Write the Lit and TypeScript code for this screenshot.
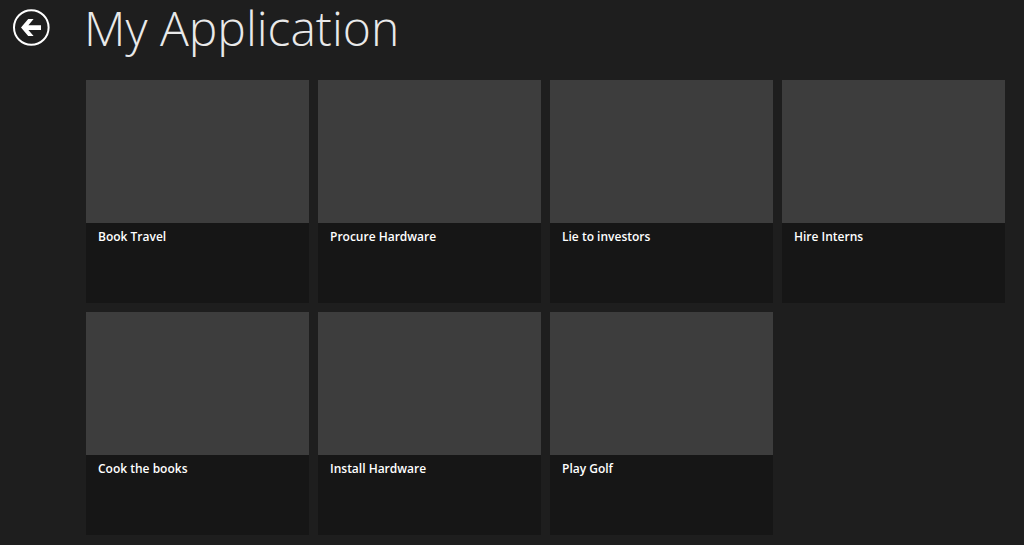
import { LitElement, html, css } from "lit";
import { customElement, property } from "lit/decorators.js";

@customElement("task-tile")
export class TaskTile extends LitElement {
  @property() label = "";

  static styles = css`
    :host {
      display: block;
    }
    .tile {
      display: grid;
      grid-template-rows: 143fr 80fr;
      aspect-ratio: 1;
      background: #161616;
      color: #fff;
      text-decoration: none;
    }
    .picture {
      background: #3d3d3d;
    }
    .label {
      padding: 4px 12px;
      font-size: 12px;
      line-height: 20px;
      font-weight: 600;
    }
  `;

  render() {
    return html`
      <a class="tile" href="#">
        <span class="picture"></span>
        <span class="label">${this.label}</span>
      </a>
    `;
  }
}

@customElement("app-root")
export class AppRoot extends LitElement {
  private tasks = [
    "Book Travel",
    "Procure Hardware",
    "Lie to investors",
    "Hire Interns",
    "Cook the books",
    "Install Hardware",
    "Play Golf",
  ];

  static styles = css`
    :host {
      display: block;
      box-sizing: border-box;
      min-height: 100vh;
      background: #1e1e1e;
      color: #fff;
      font-family: "Open Sans", "Noto Sans", sans-serif;
    }
    .header {
      display: grid;
      grid-template-columns: 84px 1fr;
      align-items: center;
      height: 56px;
    }
    .back {
      width: 38px;
      height: 38px;
      margin-left: 12px;
      padding: 0;
      border: 0;
      background: none;
      color: #fff;
      cursor: pointer;
    }
    .icon {
      display: block;
    }
    .title {
      margin: 0;
      font-size: 48px;
      line-height: 56px;
      font-weight: 300;
      color: #e9e9e9;
    }
    .tiles {
      display: grid;
      grid-template-columns: repeat(4, 1fr);
      gap: 9px;
      margin: 0;
      padding: 24px 19px 10px 86px;
      list-style: none;
    }
  `;

  render() {
    return html`
      <header class="header">
        <button class="back" aria-label="Back">
          <svg class="icon" width="38" height="38" viewBox="0 0 38 38" aria-hidden="true">
            <circle cx="19.3" cy="18.5" r="17.3" fill="none" stroke="currentColor" stroke-width="2" />
            <path
              d="M9 18.5 L16.2 10 H21.6 L16.4 16.2 H29 V20.9 H16.4 L21.6 27 H16.2 Z"
              fill="currentColor"
            />
          </svg>
        </button>
        <h1 class="title">My Application</h1>
      </header>
      <ul class="tiles">
        ${this.tasks.map(
          (task) => html`<li><task-tile label=${task}></task-tile></li>`
        )}
      </ul>
    `;
  }
}
